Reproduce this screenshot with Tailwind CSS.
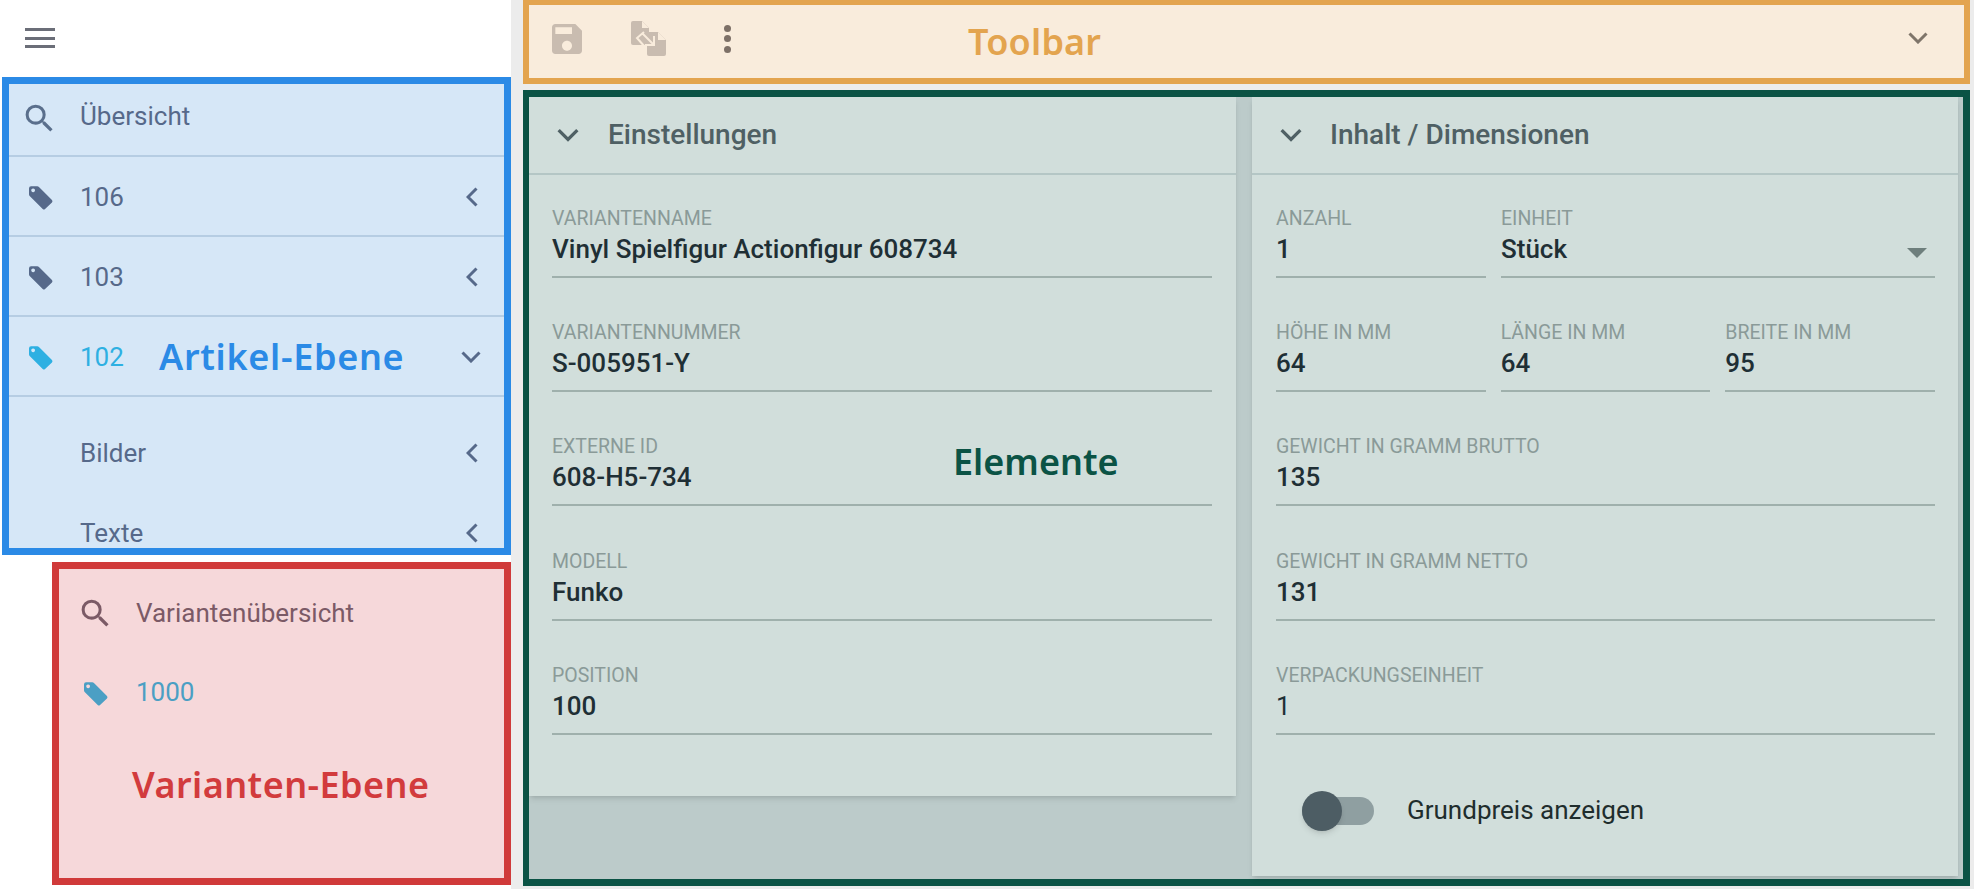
<!DOCTYPE html>
<html lang="de">
<head>
    <meta charset="UTF-8">
    <title>Varianten</title>
    <script src="https://cdn.jsdelivr.net/npm/@tailwindcss/browser@4"></script>
</head>
<body class="bg-white font-['Roboto',sans-serif] overflow-hidden">

    <!-- shared icons -->
    <svg class="hidden">
        <symbol id="tag" viewBox="0 0 70 70"><path fill-rule="evenodd" d="M6 1H24Q27 1 29 3L67 41Q70 45 67 48L46 68Q43 70 40 67L2 29Q0 27 0 24V7Q0 1 6 1ZM12 7a5.5 5.5 0 1 0 .01 0Z"/></symbol>
        <symbol id="search" viewBox="0 0 24 24"><path d="M15.5 14h-.79l-.28-.27A6.47 6.47 0 0 0 16 9.5 6.5 6.5 0 1 0 9.5 16c1.61 0 3.09-.59 4.23-1.57l.27.28v.79l5 4.99L20.49 19l-4.99-5zm-6 0C7.01 14 5 11.99 5 9.5S7.01 5 9.5 5 14 7.01 14 9.5 11.99 14 9.5 14z"/></symbol>
        <symbol id="chev-left" viewBox="0 0 12 20"><path d="M10.5 1.5 2 10l8.5 8.5" fill="none" stroke="currentColor" stroke-width="3"/></symbol>
        <symbol id="chev-down" viewBox="0 0 20 12"><path d="M1.5 1.5 10 10l8.5-8.5" fill="none" stroke="currentColor" stroke-width="3"/></symbol>
    </svg>

    <div class="flex h-[889px] w-[1974px]">

        <!-- sidebar -->
        <aside class="w-[511px] shrink-0 flex flex-col">
            <div class="h-[77px] shrink-0 pl-[25px] pt-[28px]">
                <div class="w-[30px] h-[20px] flex flex-col justify-between">
                    <div class="h-[3px] bg-[#6b6e78]"></div>
                    <div class="h-[3px] bg-[#6b6e78]"></div>
                    <div class="h-[3px] bg-[#6b6e78]"></div>
                </div>
            </div>

            <!-- Artikel-Ebene -->
            <nav class="ml-[2px] h-[478px] shrink-0 overflow-hidden border-[7px] border-[#2b8ae6] bg-[#d6e7f7] text-[#56698a] text-[26px]">
                <div class="h-[73px] flex items-center pl-[71px] pb-[6px] relative border-b-2 border-[#b6cde3]">
                    <svg class="absolute left-[12px] top-[16px] w-[37px] h-[37px] fill-[#5a6f8c]"><use href="#search"/></svg>
                    <span>Übersicht</span>
                </div>
                <div class="h-[80px] flex items-center pl-[71px] pr-[26px] pt-[2px] justify-between border-b-2 border-[#b6cde3] relative">
                    <svg class="absolute left-[20px] top-[29px] w-[24px] h-[24px] fill-[#56698a]"><use href="#tag"/></svg>
                    <span>106</span>
                    <svg class="w-[12px] h-[20px]"><use href="#chev-left"/></svg>
                </div>
                <div class="h-[80px] flex items-center pl-[71px] pr-[26px] pt-[2px] justify-between border-b-2 border-[#b6cde3] relative">
                    <svg class="absolute left-[20px] top-[29px] w-[24px] h-[24px] fill-[#56698a]"><use href="#tag"/></svg>
                    <span>103</span>
                    <svg class="w-[12px] h-[20px]"><use href="#chev-left"/></svg>
                </div>
                <div class="h-[80px] flex items-center pl-[71px] pr-[23px] pt-[2px] border-b-2 border-[#b6cde3] relative">
                    <svg class="absolute left-[20px] top-[29px] w-[24px] h-[24px] fill-[#2eb0e2]"><use href="#tag"/></svg>
                    <span class="text-[#2eb0e2] w-[79px]">102</span>
                    <span class="font-['Noto_Sans',sans-serif] font-semibold text-[36px] tracking-[0.7px] text-[#2b8ae6]">Artikel-Ebene</span>
                    <svg class="ml-auto w-[20px] h-[12px]"><use href="#chev-down"/></svg>
                </div>
                <div class="mt-[16px] h-[80px] flex items-center pl-[71px] pr-[26px] justify-between">
                    <span>Bilder</span>
                    <svg class="w-[12px] h-[20px]"><use href="#chev-left"/></svg>
                </div>
                <div class="h-[80px] flex items-center pl-[71px] pr-[26px] justify-between">
                    <span>Texte</span>
                    <svg class="w-[12px] h-[20px]"><use href="#chev-left"/></svg>
                </div>
            </nav>

            <!-- Varianten-Ebene -->
            <section class="mt-[7px] ml-[52px] h-[323px] shrink-0 border-[7px] border-[#d03a3a] bg-[#f6d8da] text-[26px]">
                <div class="h-[74px] flex items-center pl-[77px] pt-[14px] text-[#7b5a66] relative">
                    <svg class="absolute left-[18px] top-[26px] w-[37px] h-[37px] fill-[#7b5a66]"><use href="#search"/></svg>
                    <span>Variantenübersicht</span>
                </div>
                <div class="h-[80px] flex items-center pl-[77px] pt-[18px] text-[#4b9fc4] relative">
                    <svg class="absolute left-[25px] top-[39px] w-[24px] h-[24px] fill-[#4b9fc4]"><use href="#tag"/></svg>
                    <span>1000</span>
                </div>
                <div class="pl-[73px] pt-[37px] font-['Noto_Sans',sans-serif] font-semibold text-[36px] leading-[50px] tracking-[0.45px] text-[#d23b3d]">Varianten-Ebene</div>
            </section>
        </aside>

        <!-- main -->
        <main class="flex-1 bg-[#ececec] pl-[12px] pr-[4px] flex flex-col">

            <!-- toolbar -->
            <header class="h-[84px] shrink-0 border-[6px] border-t-[5px] border-[#e3a44f] bg-[#f9ecdc] flex items-center relative">
                <svg class="ml-[18px] w-[40px] h-[40px] fill-[#c9bcb0] -mt-[6px]" viewBox="0 0 24 24"><path d="M17 3H5c-1.11 0-2 .9-2 2v14c0 1.1.89 2 2 2h14c1.1 0 2-.9 2-2V7l-4-4zm-5 16c-1.66 0-3-1.34-3-3s1.34-3 3-3 3 1.34 3 3-1.34 3-3 3zm3-10H5V5h10v4z"/></svg>
                <svg class="ml-[44px] w-[36px] h-[36px] -mt-[6px]" viewBox="0 0 36 36">
                    <path fill="#c9bcb0" d="M2 0H11L18 7V24H2Q0 24 0 22V2Q0 0 2 0Z"/>
                    <path fill="#c9bcb0" d="M16 11H27L35 19V33Q35 35 33 35H18Q16 35 16 33Z"/>
                    <path fill="#f9ecdc" d="M11 0 18 7H11Z M27 11 35 19H27Z"/>
                    <path fill="none" stroke="#f9ecdc" stroke-width="2" d="M13 11 6 17 14 26 M12 13 22 23 M23 15V24H14"/>
                </svg>
                <div class="ml-[57px] flex flex-col gap-[3.5px] -mt-[6px]">
                    <div class="w-[7px] h-[7px] rounded-full bg-[#7d7067]"></div>
                    <div class="w-[7px] h-[7px] rounded-full bg-[#7d7067]"></div>
                    <div class="w-[7px] h-[7px] rounded-full bg-[#7d7067]"></div>
                </div>
                <span class="ml-[237px] font-['Noto_Sans',sans-serif] font-semibold text-[36px] tracking-[0.2px] text-[#e3a44f]">Toolbar</span>
                <svg class="ml-auto mr-[36px] -mt-[8px] w-[20px] h-[12px] text-[#7f756a]"><use href="#chev-down"/></svg>
            </header>

            <!-- elements -->
            <div class="mt-[6px] h-[796px] shrink-0 border-[6px] border-t-[7px] border-r-[7px] border-b-[7px] border-[#0b5345] bg-[#bccbca] flex gap-[16px] pr-[5px] relative">

                <span class="absolute left-[424px] top-[340px] font-['Noto_Sans',sans-serif] font-semibold text-[36px] leading-[50px] text-[#0b5345]">Elemente</span>

                <!-- Einstellungen -->
                <section class="w-[707px] h-[699px] shrink-0 bg-[#d1dedb] shadow-md">
                    <h2 class="h-[78px] flex items-center border-b-2 border-[#b4c6c5] text-[28px] font-medium text-[#4f6064]">
                        <svg class="ml-[28px] mr-[29px] w-[22px] h-[14px]"><use href="#chev-down"/></svg>
                        Einstellungen
                    </h2>
                    <div class="pt-[31px] pl-[23px] pr-[24px] flex flex-col gap-[42.2px]">
                        <div class="border-b-2 border-[#9fb0ac] pb-[8px]">
                            <div class="h-[24px] leading-[26px] text-[19.5px] text-[#8a9a98]">VARIANTENNAME</div>
                            <div class="h-[38px] leading-[38px] text-[26px] font-medium text-[#1f2f35]">Vinyl Spielfigur Actionfigur 608734</div>
                        </div>
                        <div class="border-b-2 border-[#9fb0ac] pb-[8px]">
                            <div class="h-[24px] leading-[26px] text-[19.5px] text-[#8a9a98]">VARIANTENNUMMER</div>
                            <div class="h-[38px] leading-[38px] text-[26px] font-medium text-[#1f2f35]">S-005951-Y</div>
                        </div>
                        <div class="border-b-2 border-[#9fb0ac] pb-[8px]">
                            <div class="h-[24px] leading-[26px] text-[19.5px] text-[#8a9a98]">EXTERNE ID</div>
                            <div class="h-[38px] leading-[38px] text-[26px] font-medium text-[#1f2f35]">608-H5-734</div>
                        </div>
                        <div class="border-b-2 border-[#9fb0ac] pb-[8px]">
                            <div class="h-[24px] leading-[26px] text-[19.5px] text-[#8a9a98]">MODELL</div>
                            <div class="h-[38px] leading-[38px] text-[26px] font-medium text-[#1f2f35]">Funko</div>
                        </div>
                        <div class="border-b-2 border-[#9fb0ac] pb-[8px]">
                            <div class="h-[24px] leading-[26px] text-[19.5px] text-[#8a9a98]">POSITION</div>
                            <div class="h-[38px] leading-[38px] text-[26px] font-medium text-[#1f2f35]">100</div>
                        </div>
                    </div>
                </section>

                <!-- Inhalt / Dimensionen -->
                <section class="flex-1 bg-[#d1dedb] shadow-md mb-[3px]">
                    <h2 class="h-[78px] flex items-center border-b-2 border-[#b4c6c5] text-[28px] font-medium text-[#4f6064]">
                        <svg class="ml-[28px] mr-[28px] w-[22px] h-[14px]"><use href="#chev-down"/></svg>
                        Inhalt / Dimensionen
                    </h2>
                    <div class="pt-[31px] pl-[24px] pr-[23px] flex flex-col gap-[42.2px]">
                        <div class="grid grid-cols-[210px_1fr] gap-x-[15px]">
                            <div class="border-b-2 border-[#9fb0ac] pb-[8px]">
                                <div class="h-[24px] leading-[26px] text-[19.5px] text-[#8a9a98]">ANZAHL</div>
                                <div class="h-[38px] leading-[38px] text-[26px] font-medium text-[#1f2f35]">1</div>
                            </div>
                            <div class="border-b-2 border-[#9fb0ac] pb-[8px] relative">
                                <div class="h-[24px] leading-[26px] text-[19.5px] text-[#8a9a98]">EINHEIT</div>
                                <div class="h-[38px] leading-[38px] text-[26px] font-medium text-[#1f2f35]">Stück</div>
                                <div class="absolute right-[8px] top-[42px] w-0 h-0 border-x-[10px] border-x-transparent border-t-[10px] border-t-[#6e7f7d]"></div>
                            </div>
                        </div>
                        <div class="grid grid-cols-3 gap-x-[15px]">
                            <div class="border-b-2 border-[#9fb0ac] pb-[8px]">
                                <div class="h-[24px] leading-[26px] text-[19.5px] text-[#8a9a98]">HÖHE IN MM</div>
                                <div class="h-[38px] leading-[38px] text-[26px] font-medium text-[#1f2f35]">64</div>
                            </div>
                            <div class="border-b-2 border-[#9fb0ac] pb-[8px]">
                                <div class="h-[24px] leading-[26px] text-[19.5px] text-[#8a9a98]">LÄNGE IN MM</div>
                                <div class="h-[38px] leading-[38px] text-[26px] font-medium text-[#1f2f35]">64</div>
                            </div>
                            <div class="border-b-2 border-[#9fb0ac] pb-[8px]">
                                <div class="h-[24px] leading-[26px] text-[19.5px] text-[#8a9a98]">BREITE IN MM</div>
                                <div class="h-[38px] leading-[38px] text-[26px] font-medium text-[#1f2f35]">95</div>
                            </div>
                        </div>
                        <div class="border-b-2 border-[#9fb0ac] pb-[8px]">
                            <div class="h-[24px] leading-[26px] text-[19.5px] text-[#8a9a98]">GEWICHT IN GRAMM BRUTTO</div>
                            <div class="h-[38px] leading-[38px] text-[26px] font-medium text-[#1f2f35]">135</div>
                        </div>
                        <div class="border-b-2 border-[#9fb0ac] pb-[8px]">
                            <div class="h-[24px] leading-[26px] text-[19.5px] text-[#8a9a98]">GEWICHT IN GRAMM NETTO</div>
                            <div class="h-[38px] leading-[38px] text-[26px] font-medium text-[#1f2f35]">131</div>
                        </div>
                        <div class="border-b-2 border-[#9fb0ac] pb-[8px]">
                            <div class="h-[24px] leading-[26px] text-[19.5px] text-[#8a9a98]">VERPACKUNGSEINHEIT</div>
                            <div class="h-[38px] leading-[38px] text-[26px] text-[#1f2f35]">1</div>
                        </div>
                    </div>
                    <div class="mt-[56px] ml-[50px] flex items-center h-[40px]">
                        <div class="relative w-[72px] h-[28px] rounded-full bg-[#8f9fa1]">
                            <div class="absolute left-0 -top-[6px] w-[40px] h-[40px] rounded-full bg-[#4d5d64] shadow-md"></div>
                        </div>
                        <span class="ml-[33px] text-[26px] text-[#1f2d2d]">Grundpreis anzeigen</span>
                    </div>
                </section>
            </div>
        </main>
    </div>
</body>
</html>
